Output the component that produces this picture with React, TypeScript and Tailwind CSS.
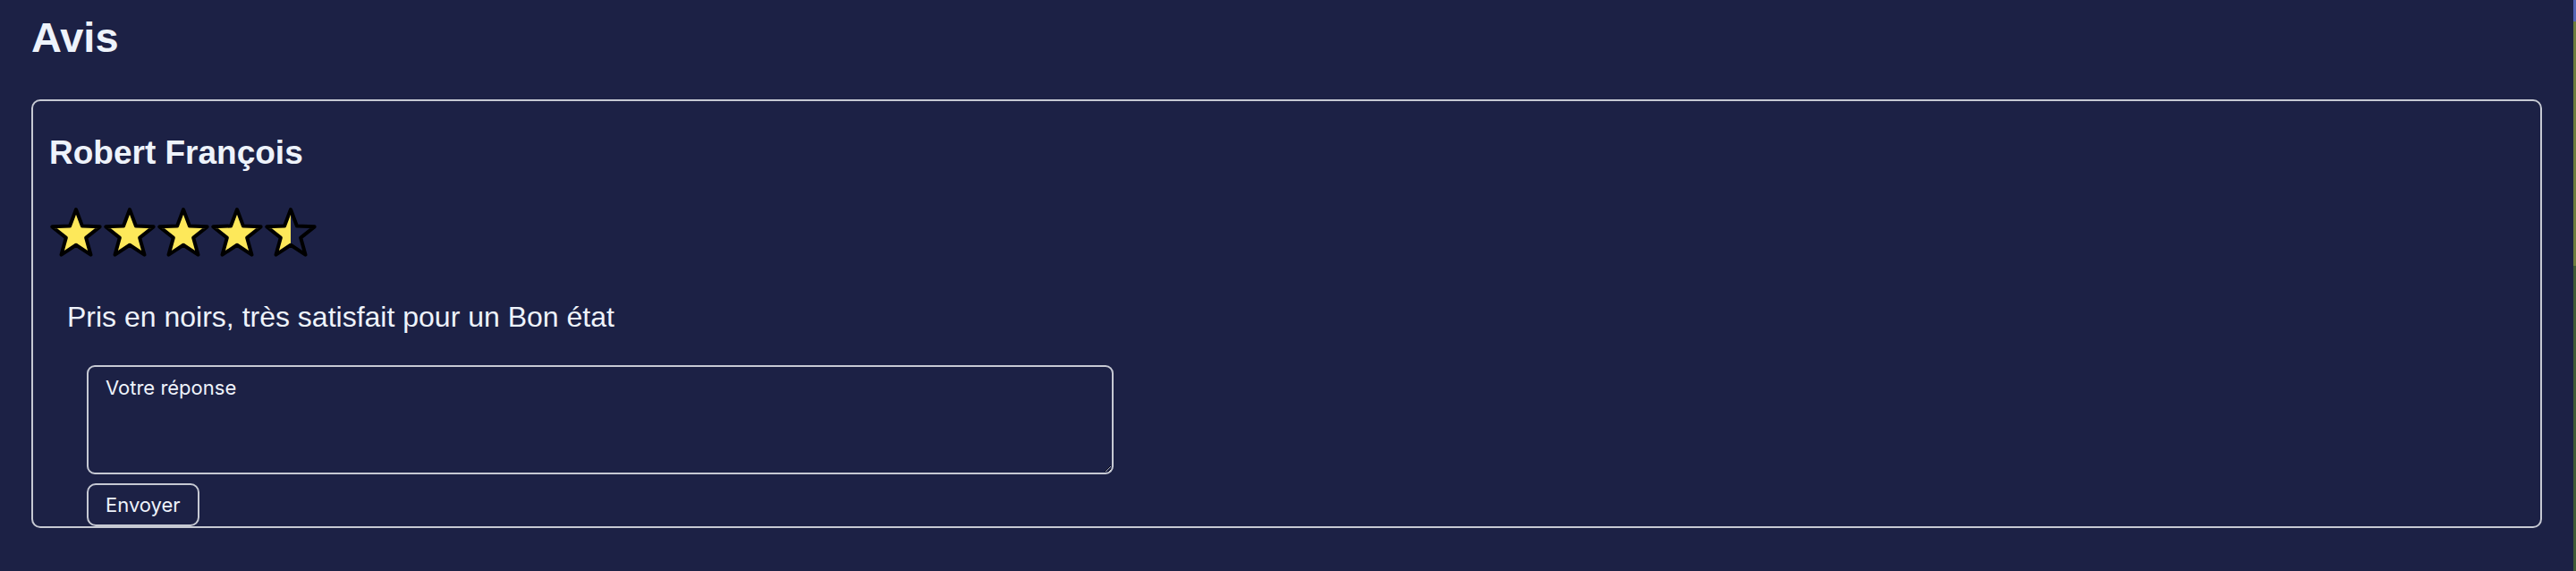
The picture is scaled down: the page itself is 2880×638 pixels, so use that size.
import React from "react";

const STAR =
  "30,3 36.91,21.49 56.63,22.35 41.18,34.63 46.46,53.65 30,42.76 13.54,53.65 18.82,34.63 3.37,22.35 23.09,21.49";

function Star({ kind }: { kind: "full" | "half" }) {
  return (
    <svg width="60" height="60" viewBox="0 0 60 60" className="block shrink-0">
      {kind === "half" && (
        <defs>
          <linearGradient id="halfStar" x1="0" y1="0" x2="60" y2="0" gradientUnits="userSpaceOnUse">
            <stop offset="0.5" stopColor="#fde85a" />
            <stop offset="0.5" stopColor="#fde85a" stopOpacity="0" />
          </linearGradient>
        </defs>
      )}
      <polygon
        points={STAR}
        fill={kind === "full" ? "#fde85a" : "url(#halfStar)"}
        stroke="#000000"
        strokeWidth="4"
        strokeLinejoin="round"
      />
    </svg>
  );
}

export default function App() {
  return (
    <div className="flex min-h-[638px] w-full bg-[#1c2145]">
      <div className="flex-1 pl-[35px] pr-[35px] pt-[19px] pb-[40px] text-[#eef3fb]">
        <h1 className="font-['Liberation_Sans',Arial,sans-serif] text-[47px] font-bold leading-[45px]">
          Avis
        </h1>
        <div className="mt-[47px] flex flex-col rounded-[10px] border-2 border-[#c6c9d3] pl-[18px] pt-[40px]">
          <h3 className="font-['Liberation_Sans',Arial,sans-serif] text-[37px] font-bold leading-[36px]">
            Robert François
          </h3>
          <div className="mt-[42px] flex h-[60px] items-start">
            <Star kind="full" />
            <Star kind="full" />
            <Star kind="full" />
            <Star kind="full" />
            <Star kind="half" />
          </div>
          <p className="ml-[20px] mt-[48px] font-['Liberation_Sans',Arial,sans-serif] text-[32px] leading-[30px]">
            Pris en noirs, très satisfait pour un Bon état
          </p>
          <div className="ml-[42px] mt-[39px] flex flex-col items-start">
            <textarea
              placeholder="Votre réponse"
              className="block h-[122px] w-[1148px] rounded-[9px] border-2 border-[#c6c9d3] bg-transparent px-[19px] pt-[9px] font-['Inter',sans-serif] text-[22px] leading-[29px] text-[#eef3fb] placeholder:text-[#eef3fb] outline-none"
            />
            <button className="mt-[10px] h-[48px] rounded-[10px] border-2 border-[#c6c9d3] bg-transparent px-[19px] font-['Inter',sans-serif] text-[22px] leading-[29px] text-[#eef3fb]">
              Envoyer
            </button>
          </div>
        </div>
      </div>
      <div className="flex w-[3px] flex-col">
        <div className="h-[24px] bg-[#5565b5]" />
        <div className="h-[273px] bg-[#6c7d3e]" />
        <div className="flex-1 bg-[#3f5b35]" />
      </div>
    </div>
  );
}
